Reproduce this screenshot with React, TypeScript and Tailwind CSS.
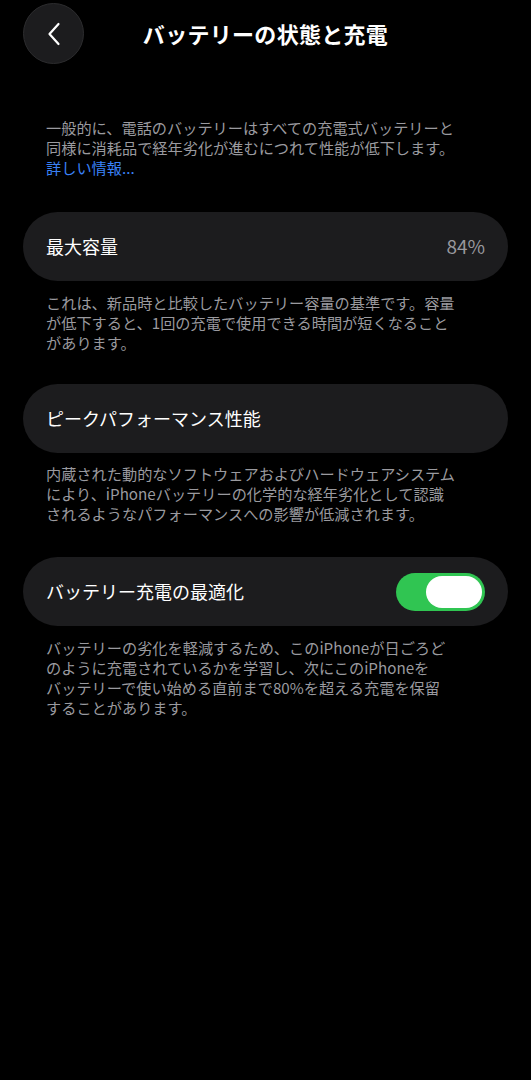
import React from 'react';

const jp = { fontFamily: '"Noto Sans CJK JP", "Noto Sans", sans-serif' };

const Note: React.FC<{ lines: React.ReactNode[]; className?: string }> = ({ lines, className = '' }) => (
  <div className={`px-[46px] text-[15.2px] leading-[20px] text-[#9a9a9f] ${className}`}>
    {lines.map((l, i) => (
      <div key={i} className="whitespace-nowrap">{l}</div>
    ))}
  </div>
);

const Row: React.FC<{ children: React.ReactNode; className?: string }> = ({ children, className = '' }) => (
  <div className={`mx-[23px] h-[69px] rounded-full bg-[#1c1c1e] pl-[23px] pr-[23px] flex items-center justify-between ${className}`}>
    {children}
  </div>
);

export default function App() {
  const [optimized, setOptimized] = React.useState(true);

  return (
    <div className="min-h-[1080px] w-[531px] bg-black text-white pt-[3px]" style={jp}>
      {/* nav bar */}
      <div className="relative h-[61px] flex items-center justify-center">
        <button className="absolute left-[23px] top-0 w-[61px] h-[61px] rounded-full bg-[#1c1c1e] border border-[#2c2c2e] flex items-center justify-center">
          <svg width="14" height="24" viewBox="0 0 14 24" fill="none">
            <path d="M11.5 2 L2.5 12 L11.5 22" stroke="white" strokeWidth="2.2" strokeLinecap="round" strokeLinejoin="round" />
          </svg>
        </button>
        <h1 className="text-[22px] font-bold tracking-[0.3px]">バッテリーの状態と充電</h1>
      </div>

      <Note
        className="mt-[53px]"
        lines={[
          '一般的に、電話のバッテリーはすべての充電式バッテリーと',
          '同様に消耗品で経年劣化が進むにつれて性能が低下します。',
          <span className="text-[#3a82f7]">詳しい情報...</span>,
        ]}
      />

      <Row className="mt-[35px]">
        <span className="text-[18px]">最大容量</span>
        <span className="text-[19px] text-[#98989d]">84%</span>
      </Row>
      <Note
        className="mt-[11px]"
        lines={[
          'これは、新品時と比較したバッテリー容量の基準です。容量',
          'が低下すると、1回の充電で使用できる時間が短くなること',
          'があります。',
        ]}
      />

      <Row className="mt-[32px]">
        <span className="text-[18px]">ピークパフォーマンス性能</span>
      </Row>
      <Note
        className="mt-[10px]"
        lines={[
          '内蔵された動的なソフトウェアおよびハードウェアシステム',
          'により、iPhoneバッテリーの化学的な経年劣化として認識',
          'されるようなパフォーマンスへの影響が低減されます。',
        ]}
      />

      <Row className="mt-[34px]">
        <span className="text-[18px]">バッテリー充電の最適化</span>
        <button
          onClick={() => setOptimized(!optimized)}
          className={`w-[89px] h-[38px] rounded-full p-[3px] flex items-center ${optimized ? 'bg-[#30c552] justify-end' : 'bg-[#3a3a3c] justify-start'}`}
        >
          <span className="block w-[56px] h-[32px] rounded-full bg-white" />
        </button>
      </Row>
      <Note
        className="mt-[11px]"
        lines={[
          'バッテリーの劣化を軽減するため、このiPhoneが日ごろど',
          'のように充電されているかを学習し、次にこのiPhoneを',
          'バッテリーで使い始める直前まで80%を超える充電を保留',
          'することがあります。',
        ]}
      />
    </div>
  );
}
